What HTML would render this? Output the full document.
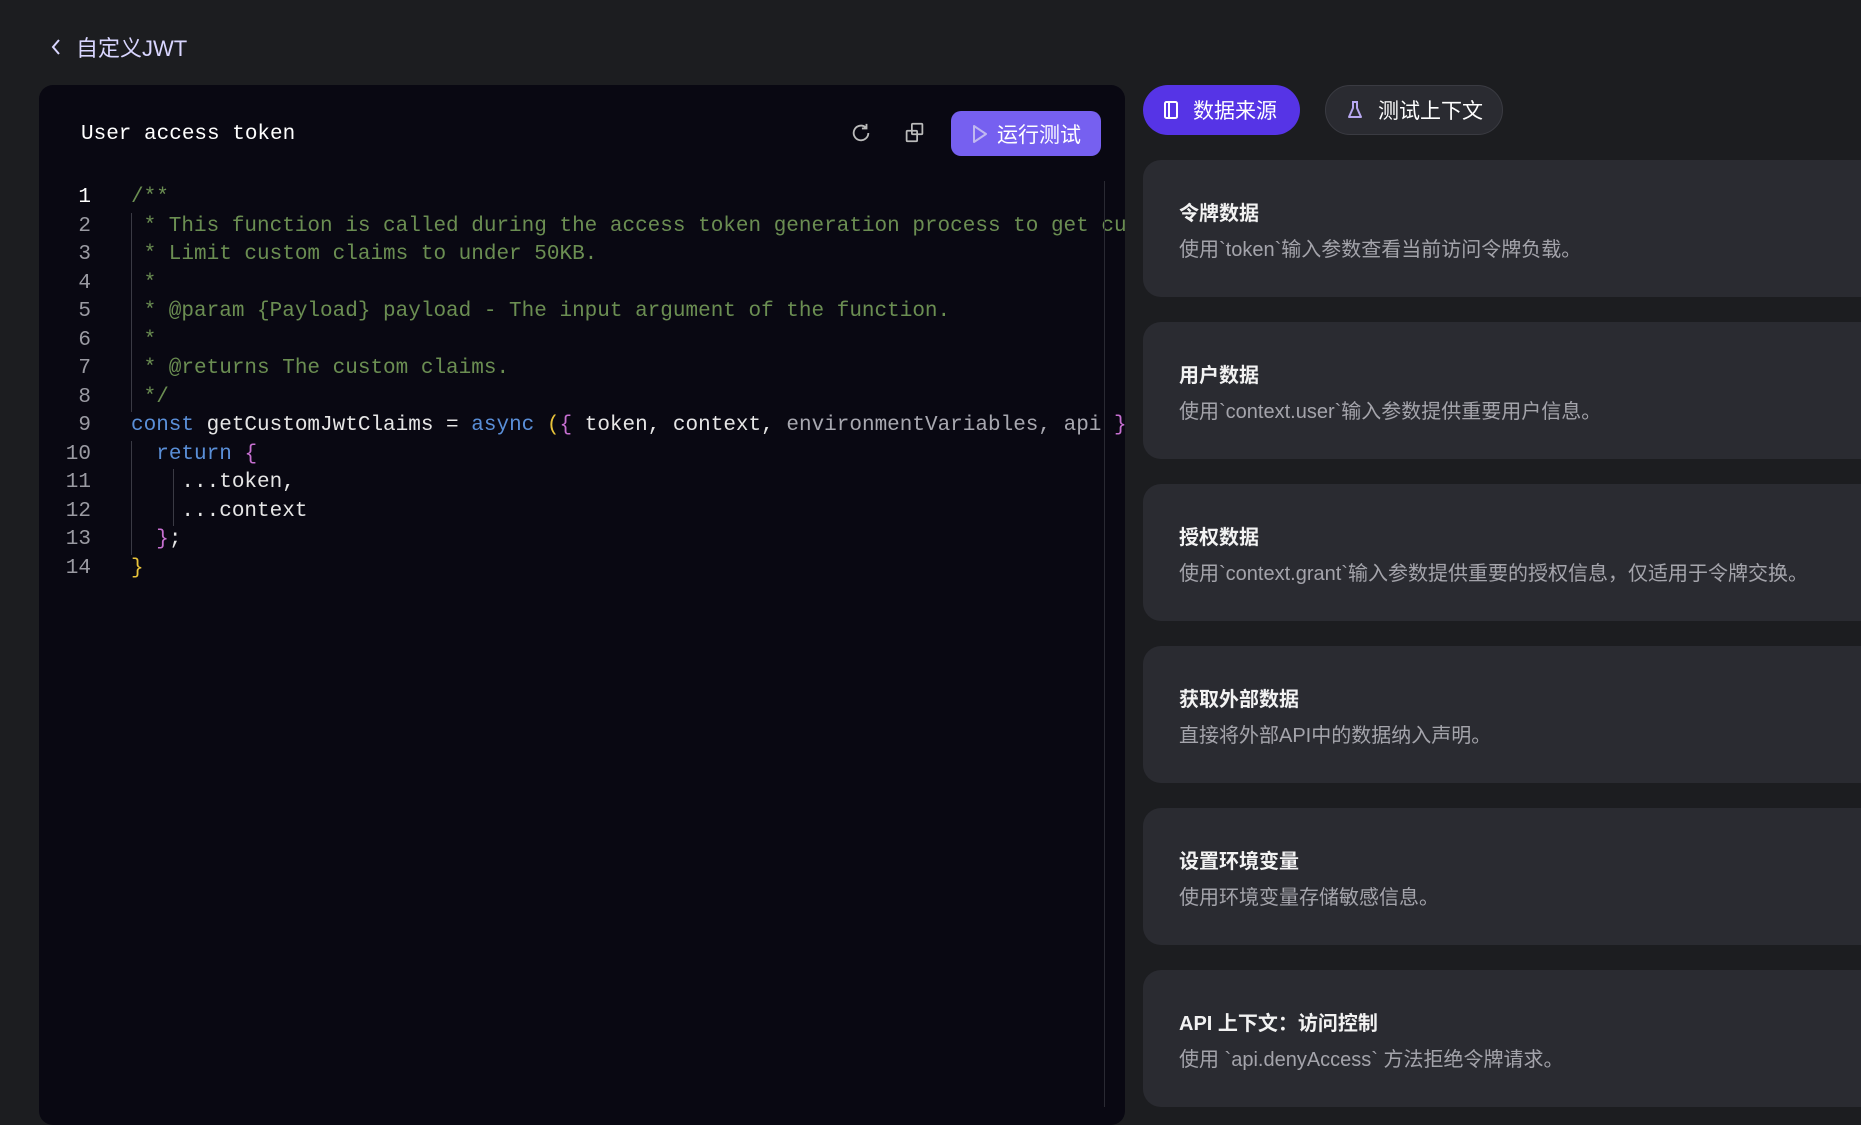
<!DOCTYPE html>
<html><head><meta charset="utf-8"><style>
*{margin:0;padding:0;box-sizing:border-box}
body{width:1861px;height:1107px;background:#1c1d20;overflow:hidden;font-family:"Liberation Sans","Noto Sans CJK SC",sans-serif;position:relative}
.back{position:absolute;left:50px;top:31px;color:#d9d6ff;font-size:22px;display:flex;align-items:center;gap:14px}
.panel{position:absolute;left:39px;top:85px;width:1086px;height:1040px;background:#090812;border-radius:14px}
.ptitle{position:absolute;left:81px;top:123px;color:#fff;font-family:"Liberation Mono",monospace;font-size:21px}
.btn{position:absolute;left:951px;top:111px;width:150px;height:45px;background:#7660f0;border-radius:10px;color:#fff;font-size:21px;display:flex;align-items:center;justify-content:center;gap:8px}
.vline{position:absolute;left:1104px;top:181px;width:1px;height:926px;background:#2a2a33}
.code{position:absolute;top:184px;left:0;font-family:"Liberation Mono",monospace;font-size:21px;line-height:28.5px}
.nums{position:absolute;top:0;left:40px;width:51px;text-align:right;color:#9a9aa2;white-space:pre}
.src{position:absolute;top:0;left:131px;color:#e6e6e6;width:994px;overflow:hidden;white-space:pre}
.c{color:#6b8e52}.k{color:#5a8fd8}.y{color:#e8c33a}.p{color:#c66fd0}.g{color:#a8a8b0}
.guide{position:absolute;width:1px;background:#3a3a44}
.tab{position:absolute;top:85px;height:50px;border-radius:25px;display:flex;align-items:center;gap:14px;padding-left:20px;font-size:21px;color:#fff}
.card{position:absolute;left:1143px;width:740px;height:137px;background:#2a2b31;border-radius:18px}
.card h3{position:absolute;left:36px;top:37px;font-size:20px;font-weight:bold;color:#f2f2f2}
.card p{position:absolute;left:36px;top:73px;font-size:20px;color:#a4a4ab}
</style></head><body>
<div class="back"><svg width="12" height="20" viewBox="0 0 12 20"><path d="M9 3 L3 10 L9 17" stroke="#d9d6ff" stroke-width="2" fill="none"/></svg>自定义JWT</div>
<div class="panel"></div>
<div class="ptitle">User access token</div>
<svg style="position:absolute;left:850px;top:122px" width="22" height="22" viewBox="0 0 24 24" fill="none" stroke="#bbb" stroke-width="2"><path d="M20 12a8 8 0 1 1-3-6.3"/><path d="M18 2v5h-5"/></svg>
<svg style="position:absolute;left:904px;top:122px" width="21" height="21" viewBox="0 0 24 24" fill="none" stroke="#bbb" stroke-width="2"><rect x="9" y="2" width="12" height="12" rx="1"/><rect x="3" y="10" width="12" height="12" rx="1"/></svg>
<div class="btn"><svg width="18" height="20" viewBox="0 0 18 20"><path d="M3 2 L15 10 L3 18 Z" stroke="#c0b8f0" stroke-width="2" fill="none" stroke-linejoin="round"/></svg>运行测试</div>
<div class="code"><div class="nums"><span style="color:#fff">1</span>
2
3
4
5
6
7
8
9
10
11
12
13
14</div><div class="guide" style="left:131px;top:29px;height:199px"></div><div class="guide" style="left:131px;top:257px;height:114px"></div><div class="guide" style="left:173px;top:285px;height:57px"></div><div class="src"><span class="c">/**
 * This function is called during the access token generation process to get custom claims
 * Limit custom claims to under 50KB.
 *
 * @param {Payload} payload - The input argument of the function.
 *
 * @returns The custom claims.
 */</span>
<span class="k">const</span> getCustomJwtClaims = <span class="k">async</span> <span class="y">(</span><span class="p">{</span> token, context, <span class="g">environmentVariables, api</span> <span class="p">}</span>
  <span class="k">return</span> <span class="p">{</span>
    ...token,
    ...context
  <span class="p">}</span>;
<span class="y">}</span></div></div>
<div class="vline"></div>
<div class="tab" style="left:1143px;width:157px;background:#5634e6"><svg width="16" height="20" viewBox="0 0 16 20"><rect x="2" y="2" width="12" height="16" rx="1.5" stroke="#fff" stroke-width="2" fill="none"/><path d="M6 2v16" stroke="#fff" stroke-width="2"/></svg>数据来源</div>
<div class="tab" style="left:1325px;width:178px;background:#2a2b31;border:1px solid #3a3b42"><svg width="18" height="20" viewBox="0 0 18 20"><path d="M6 2h6M7 2v6L3 17h12L11 8V2" stroke="#b8a8f0" stroke-width="2" fill="none" stroke-linejoin="round"/></svg>测试上下文</div>
<div class="card" style="top:160px"><h3>令牌数据</h3><p>使用`token`输入参数查看当前访问令牌负载。</p></div>
<div class="card" style="top:322px"><h3>用户数据</h3><p>使用`context.user`输入参数提供重要用户信息。</p></div>
<div class="card" style="top:484px"><h3>授权数据</h3><p>使用`context.grant`输入参数提供重要的授权信息，仅适用于令牌交换。</p></div>
<div class="card" style="top:646px"><h3>获取外部数据</h3><p>直接将外部API中的数据纳入声明。</p></div>
<div class="card" style="top:808px"><h3>设置环境变量</h3><p>使用环境变量存储敏感信息。</p></div>
<div class="card" style="top:970px"><h3>API 上下文：访问控制</h3><p>使用 `api.denyAccess` 方法拒绝令牌请求。</p></div>
</body></html>
